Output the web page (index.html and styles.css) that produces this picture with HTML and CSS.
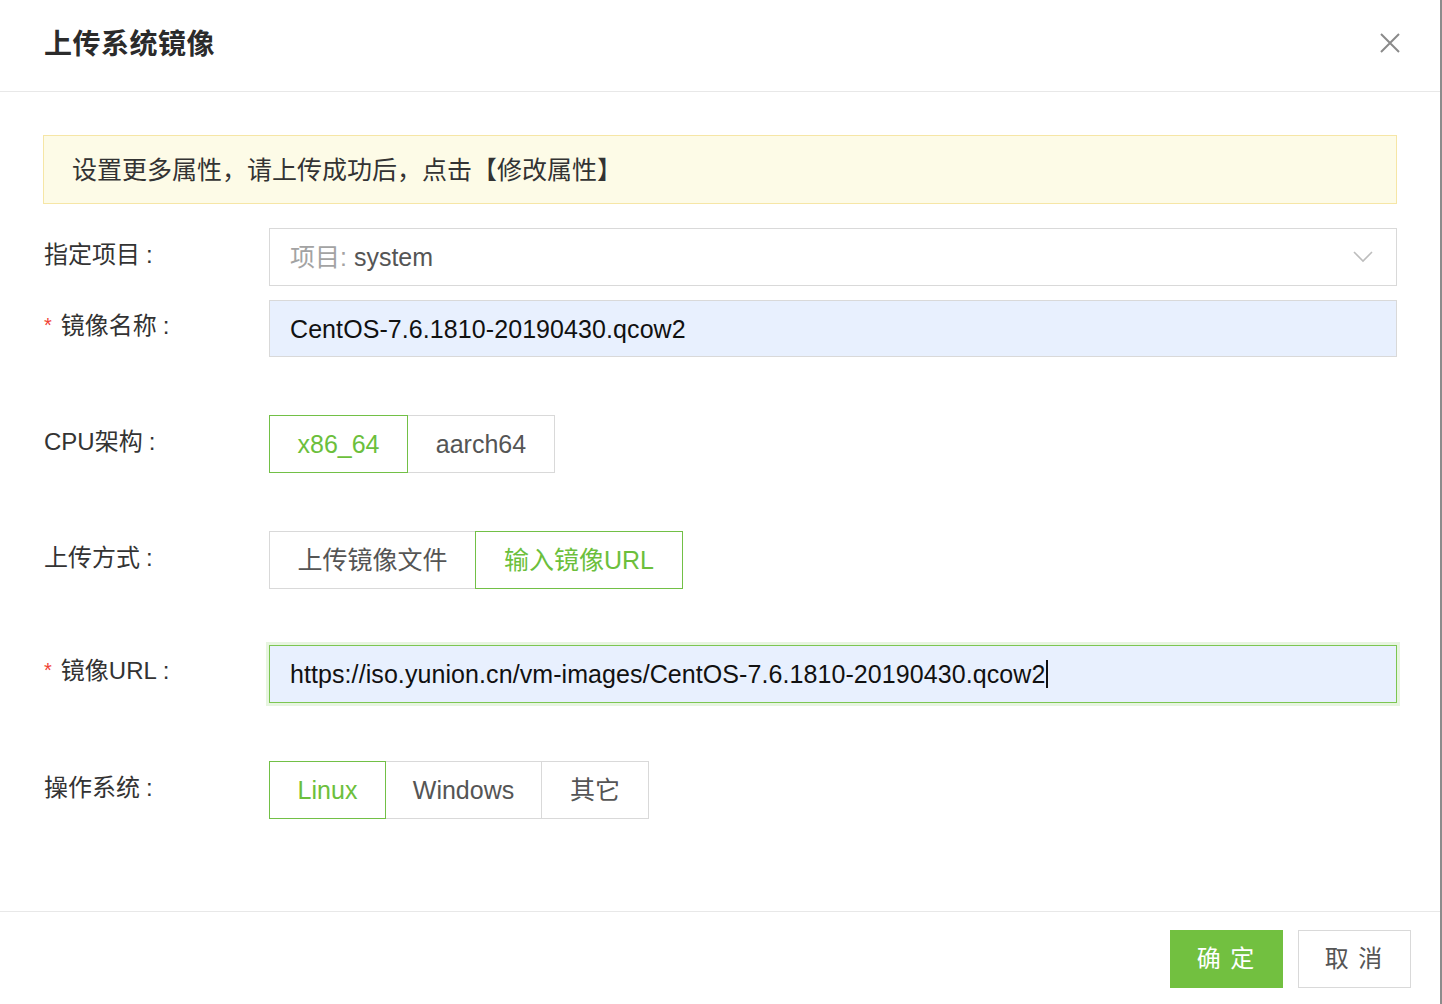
FILE: index.html
```html
<!DOCTYPE html>
<html lang="zh-CN">
<head>
<meta charset="utf-8">
<title>上传系统镜像</title>
<link rel="stylesheet" href="styles.css">
</head>
<body>
<div class="dialog">
  <header class="dlg-header">
    <h1 class="dlg-title">上传系统镜像</h1>
    <button class="dlg-close" aria-label="关闭">
      <svg width="22" height="22" viewBox="0 0 22 22"><path d="M2 2 L20 20 M20 2 L2 20" stroke="#8a8a8a" stroke-width="2" fill="none"/></svg>
    </button>
  </header>
  <main class="dlg-body">
    <div class="alert">设置更多属性，请上传成功后，点击【修改属性】</div>
    <div class="form">
      <div class="row row-tight">
        <div class="label">指定项目<span class="colon">:</span></div>
        <div class="control">
          <div class="select">
            <span class="sel-text"><span class="sel-prefix">项目:</span> system</span>
            <svg class="chev" width="20" height="12" viewBox="0 0 20 12"><path d="M1 1 L10 10 L19 1" stroke="#bdbdbd" stroke-width="1.6" fill="none"/></svg>
          </div>
        </div>
      </div>
      <div class="row">
        <div class="label"><span class="req">*</span>镜像名称<span class="colon">:</span></div>
        <div class="control">
          <div class="input autofill">CentOS-7.6.1810-20190430.qcow2</div>
        </div>
      </div>
      <div class="row">
        <div class="label">CPU架构<span class="colon">:</span></div>
        <div class="control">
          <div class="seg">
            <div class="seg-btn active w-x86">x86_64</div>
            <div class="seg-btn w-arm">aarch64</div>
          </div>
        </div>
      </div>
      <div class="row">
        <div class="label">上传方式<span class="colon">:</span></div>
        <div class="control">
          <div class="seg">
            <div class="seg-btn w-file">上传镜像文件</div>
            <div class="seg-btn active w-url">输入镜像URL</div>
          </div>
        </div>
      </div>
      <div class="row row-url">
        <div class="label"><span class="req">*</span>镜像URL<span class="colon">:</span></div>
        <div class="control">
          <div class="input autofill focused">https://iso.yunion.cn/vm-images/CentOS-7.6.1810-20190430.qcow2<span class="caret"></span></div>
        </div>
      </div>
      <div class="row">
        <div class="label">操作系统<span class="colon">:</span></div>
        <div class="control">
          <div class="seg">
            <div class="seg-btn active w-linux">Linux</div>
            <div class="seg-btn w-win">Windows</div>
            <div class="seg-btn w-other">其它</div>
          </div>
        </div>
      </div>
    </div>
  </main>
  <footer class="dlg-footer">
    <button class="btn btn-primary">确 定</button>
    <button class="btn btn-default">取 消</button>
  </footer>
</div>
</body>
</html>
```
FILE: styles.css
```css
* { box-sizing: border-box; }
html, body { margin: 0; padding: 0; background: #fff; }
body {
  font-family: "Liberation Sans", "Noto Sans CJK SC", sans-serif;
  color: #333;
  line-height: 30px;
}
.dialog {
  width: 1442px;
  height: 1004px;
  border-right: 2px solid #8c8c8c;
  display: flex;
  flex-direction: column;
  overflow: hidden;
}
.dlg-header {
  height: 92px;
  border-bottom: 1px solid #e8e8e8;
  display: flex;
  align-items: center;
  justify-content: space-between;
  padding: 0 28px 8px 44px;
  flex: none;
}
.dlg-title {
  margin: 0;
  font-size: 28px;
  line-height: 34px;
  font-weight: bold;
  color: #2b2b2b;
  font-family: "Noto Sans CJK SC", sans-serif;
  letter-spacing: 0.5px;
}
.dlg-close {
  border: 0;
  background: none;
  padding: 0;
  width: 22px;
  height: 22px;
  margin-right: 11px;
  margin-top: 2px;
}
.dlg-close svg { display: block; }
.dlg-body {
  flex: 1;
  padding: 43px 43px 0 43px;
}
.alert {
  height: 69px;
  background: #fdfbe7;
  border: 1px solid #f6e6a6;
  display: flex;
  align-items: center;
  padding-left: 28px;
  padding-bottom: 3px;
  font-size: 25px;
  color: #333;
  font-family: "Noto Sans CJK SC", sans-serif;
}
.form {
  margin-top: 24px;
  display: flex;
  flex-direction: column;
  gap: 58px;
}
.row {
  display: flex;
  align-items: center;
}
.row-tight { margin-bottom: -44px; }
.row-url { margin-top: -2px; }
.label {
  width: 226px;
  flex: none;
  padding-left: 1px;
  font-size: 24px;
  color: #333;
  margin-top: -5px;
}
.colon { margin-left: 6px; }
.req {
  color: #f04134;
  font-size: 20px;
  margin-right: 9px;
  position: relative;
  top: -2px;
}
.control { flex: 1; display: flex; }
.select {
  flex: 1;
  height: 58px;
  border: 1px solid #d9d9d9;
  display: flex;
  align-items: center;
  justify-content: space-between;
  padding: 0 23px 0 20px;
  font-size: 25px;
  color: #555;
}
.sel-prefix { color: #a3a3a3; }
.input {
  flex: 1;
  height: 57px;
  border: 1px solid #d9d9d9;
  display: flex;
  align-items: center;
  padding-left: 20px;
  font-size: 25px;
  letter-spacing: 0.08px;
  color: #111;
}
.autofill { background: #e8f0fe; }
.focused {
  border-color: #7cc651;
  box-shadow: 0 0 0 3px rgba(124, 198, 81, 0.18);
  height: 58px;
}
.caret {
  display: inline-block;
  width: 2px;
  height: 28px;
  background: #111;
  margin-left: 1px;
}
.seg { display: flex; }
.seg-btn {
  height: 58px;
  border: 1px solid #d9d9d9;
  display: flex;
  align-items: center;
  justify-content: center;
  font-size: 25px;
  color: #555;
  background: #fff;
  margin-left: -1px;
  position: relative;
}
.seg-btn:first-child { margin-left: 0; }
.seg-btn.active {
  border-color: #72c046;
  color: #6cbf3c;
  z-index: 1;
}
.w-x86 { width: 139px; }
.w-arm { width: 148px; }
.w-file { width: 207px; }
.w-url { width: 208px; }
.w-linux { width: 117px; }
.w-win { width: 157px; }
.w-other { width: 108px; }
.dlg-footer {
  flex: none;
  height: 93px;
  border-top: 1px solid #e8e8e8;
  display: flex;
  justify-content: flex-end;
  align-items: flex-start;
  padding: 18px 29px 0 0;
  gap: 15px;
}
.btn {
  width: 113px;
  height: 58px;
  font-size: 24px;
  line-height: 30px;
  font-family: "Noto Sans CJK SC", sans-serif;
  border: 1px solid #d9d9d9;
  background: #fff;
  color: #555;
  padding: 0 0 5px 0;
  letter-spacing: 2px;
}
.btn-primary {
  background: #72c040;
  border-color: #72c040;
  color: #fff;
}
```
